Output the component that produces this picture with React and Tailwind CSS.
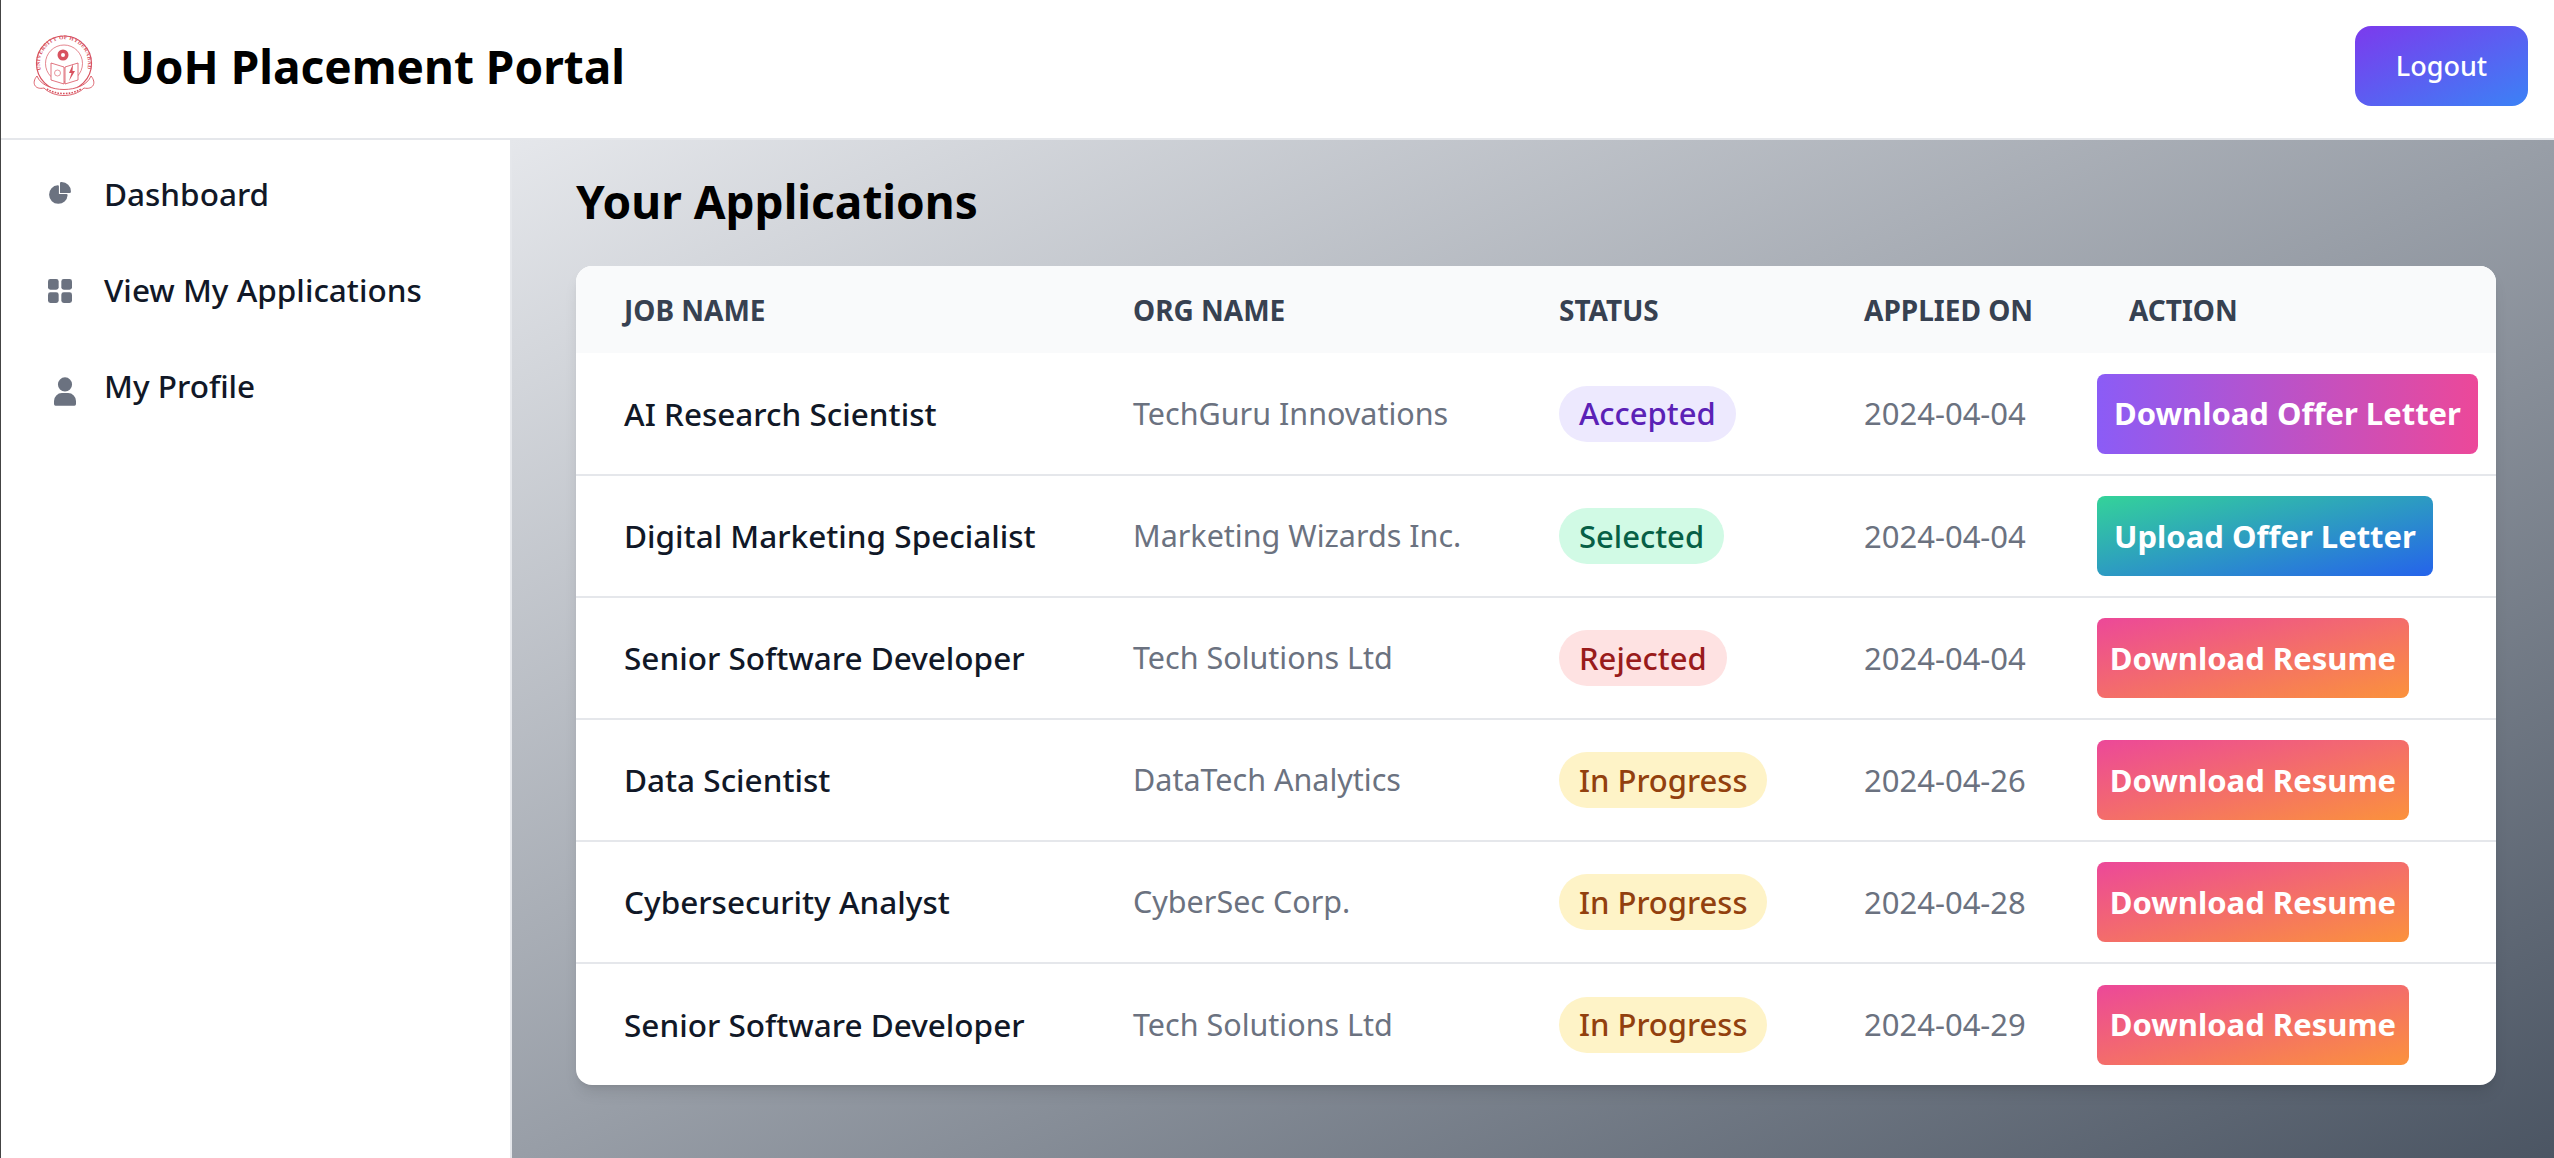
const FONT = "font-['Noto_Sans',sans-serif]"

function PieIcon({ className }) {
  return (
    <svg viewBox="0 0 22 21" fill="currentColor" className={className}>
      <path d="M16.975 11H10V4.025a1 1 0 0 0-1.066-.998 8.5 8.5 0 1 0 9.039 9.039.999.999 0 0 0-1-1.066h.002Z" />
      <path d="M12.5 0c-.157 0-.311.01-.565.027A1 1 0 0 0 11 1.02V10h8.975a1 1 0 0 0 1-.935c.013-.188.028-.374.028-.565A8.51 8.51 0 0 0 12.5 0Z" />
    </svg>
  )
}

function GridIcon({ className }) {
  return (
    <svg viewBox="0 0 18 18" fill="currentColor" className={className}>
      <rect width="8" height="8" rx="1.8" />
      <rect x="10" width="8" height="8" rx="1.8" />
      <rect y="10" width="8" height="8" rx="1.8" />
      <rect x="10" y="10" width="8" height="8" rx="1.8" />
    </svg>
  )
}

function UserIcon({ className }) {
  return (
    <svg viewBox="0 0 14 18" fill="currentColor" className={className}>
      <path d="M7 9a4.5 4.5 0 1 0 0-9 4.5 4.5 0 0 0 0 9Zm2 1H5a5.006 5.006 0 0 0-5 5v2a1 1 0 0 0 1 1h12a1 1 0 0 0 1-1v-2a5.006 5.006 0 0 0-5-5Z" />
    </svg>
  )
}

const NAV = [
  { label: 'Dashboard', Icon: PieIcon, icon: 'w-[24px] h-[23px] ml-[47px] mr-[32px] mb-[2px]' },
  { label: 'View My Applications', Icon: GridIcon, icon: 'w-[24px] h-[24px] ml-[47px] mr-[32px] mt-[2px]' },
  { label: 'My Profile', Icon: UserIcon, icon: 'w-[22px] h-[29px] ml-[53px] mr-[28px] mt-[11px]' },
]

const STATUS = {
  Accepted: 'bg-[#ede9fe] text-[#5b21b6]',
  Selected: 'bg-[#d1fae5] text-[#065f46]',
  Rejected: 'bg-[#fee2e2] text-[#991b1b]',
  'In Progress': 'bg-[#fef3c7] text-[#92400e]',
}

const RESUME = { label: 'Download Resume', width: 'w-[312px]', bg: 'bg-[linear-gradient(to_bottom_right,#ec4899,#fb923c)]' }

const ROWS = [
  { job: 'AI Research Scientist', org: 'TechGuru Innovations', status: 'Accepted', date: '2024-04-04', label: 'Download Offer Letter', width: 'w-[381px]', bg: 'bg-[linear-gradient(to_right,#8b5cf6,#ec4899)]' },
  { job: 'Digital Marketing Specialist', org: 'Marketing Wizards Inc.', status: 'Selected', date: '2024-04-04', label: 'Upload Offer Letter', width: 'w-[336px]', bg: 'bg-[linear-gradient(to_bottom_right,#34d399,#2563eb)]' },
  { job: 'Senior Software Developer', org: 'Tech Solutions Ltd', status: 'Rejected', date: '2024-04-04', ...RESUME },
  { job: 'Data Scientist', org: 'DataTech Analytics', status: 'In Progress', date: '2024-04-26', ...RESUME },
  { job: 'Cybersecurity Analyst', org: 'CyberSec Corp.', status: 'In Progress', date: '2024-04-28', ...RESUME },
  { job: 'Senior Software Developer', org: 'Tech Solutions Ltd', status: 'In Progress', date: '2024-04-29', ...RESUME },
]

function Logo() {
  return (
    <svg viewBox="0 0 64 64" className="w-[64px] h-[64px] text-[#d8525f]" fill="none" stroke="currentColor">
      <defs>
        <path id="seal-top" d="M9 36 A24 24 0 1 1 55 36" />
      </defs>
      <circle cx="32" cy="29.5" r="27.5" strokeWidth="1.2" />
      <circle cx="32" cy="29.5" r="18.5" strokeWidth="0.7" />
      <text fontSize="5.6" fontWeight="700" fontFamily="Liberation Serif, serif" fill="currentColor" stroke="none" letterSpacing="0.3">
        <textPath href="#seal-top">UNIVERSITY OF HYDERABAD</textPath>
      </text>
      <circle cx="31" cy="21" r="5.5" fill="currentColor" stroke="none" />
      <circle cx="31" cy="21" r="2" fill="#fff" stroke="none" />
      <path d="M19 29 L32 33 L32 50 L19 46 Z M46 29 L33 33 L33 50 L46 46 Z" strokeWidth="0.8" fill="#fff" />
      <circle cx="25.5" cy="39" r="3" strokeWidth="0.6" />
      <path d="M41 30 L37 39 L39.5 39 L37 47 L43 37 L40.5 37 Z" fill="currentColor" stroke="none" />
      <path d="M5 42 C-1 49 3 56 12 54 C22 64 42 64 52 54 C61 56 65 49 59 42 C52 60 12 60 5 42 Z" strokeWidth="0.9" fill="#fff" />
      <path d="M15 55 C24 61 40 61 49 55" strokeWidth="1.6" strokeDasharray="1.6 1.2" />
    </svg>
  )
}

export default function App() {
  return (
    <div className={`${FONT} h-screen flex flex-col overflow-hidden bg-white border-l border-[#444]`}>
      <header className="h-[140px] shrink-0 flex items-center justify-between border-b-2 border-[#e5e7eb] pl-[31px] pr-[26px] pb-[6px]">
        <div className="flex items-center">
          <Logo />
          <span className="ml-[24px] text-[46px] font-bold text-black">UoH Placement Portal</span>
        </div>
        <button className="w-[173px] h-[80px] rounded-[16px] bg-[linear-gradient(to_bottom_right,#7c3aed,#3b82f6)] text-white text-[27px] font-medium">
          Logout
        </button>
      </header>

      <div className="flex flex-1 min-h-0">
        <aside className="w-[511px] shrink-0 bg-white border-r-2 border-[#e5e7eb] pt-[19px] flex flex-col gap-[26px]">
          {NAV.map(({ label, Icon, icon }) => (
            <div key={label} className="h-[70px] flex items-center text-[#111827] text-[31.5px] font-medium">
              <Icon className={`${icon} text-[#6b7280] shrink-0`} />
              {label}
            </div>
          ))}
        </aside>

        <main className="flex-1 px-[64px] bg-[linear-gradient(to_bottom_right,#e5e7eb,#4b5563)]">
          <h1 className="h-[126px] pb-[3px] flex items-center text-[46px] font-bold text-black">Your Applications</h1>
          <div className="w-[1920px] rounded-[16px] overflow-hidden bg-white shadow-[0_10px_15px_-3px_rgba(0,0,0,0.1),0_4px_6px_-4px_rgba(0,0,0,0.1)]">
            <table className="w-full table-fixed border-collapse">
              <colgroup>
                <col className="w-[509px]" />
                <col className="w-[426px]" />
                <col className="w-[305px]" />
                <col className="w-[265px]" />
                <col className="w-[415px]" />
              </colgroup>
              <thead className="bg-[#f9fafb]">
                <tr className="h-[87px] text-left text-[28px] font-bold text-[#374151] uppercase">
                  <th className="pl-[48px]">Job Name</th>
                  <th className="pl-[48px]">Org Name</th>
                  <th className="pl-[48px]">Status</th>
                  <th className="pl-[48px]">Applied On</th>
                  <th className="pl-[48px]">Action</th>
                </tr>
              </thead>
              <tbody className="text-[31px]">
                {ROWS.map((r, i) => (
                  <tr key={i} className="h-[122px] border-b-2 border-[#e5e7eb] last:border-b-0">
                    <td className="pl-[48px] text-[31.5px] font-medium text-[#111827] whitespace-nowrap">{r.job}</td>
                    <td className="pl-[48px] text-[30.5px] text-[#6b7280] whitespace-nowrap">{r.org}</td>
                    <td className="pl-[48px]">
                      <span className={`inline-flex items-center h-[56px] px-[20px] rounded-full font-medium whitespace-nowrap ${STATUS[r.status]}`}>{r.status}</span>
                    </td>
                    <td className="pl-[48px] text-[#6b7280]">{r.date}</td>
                    <td className="pl-[16px]">
                      <button className={`h-[80px] rounded-[8px] text-white font-bold whitespace-nowrap ${r.width} ${r.bg}`}>{r.label}</button>
                    </td>
                  </tr>
                ))}
              </tbody>
            </table>
          </div>
        </main>
      </div>
    </div>
  )
}
